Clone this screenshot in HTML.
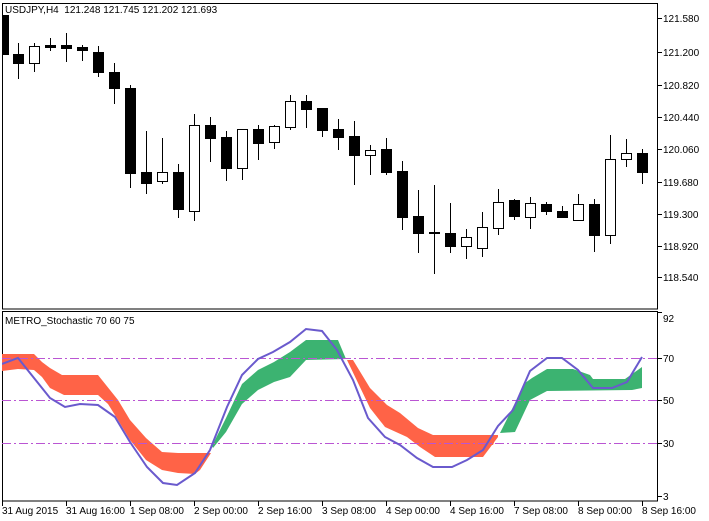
<!DOCTYPE html>
<html><head><meta charset="utf-8"><style>
html,body{margin:0;padding:0;background:#fff;width:709px;height:521px;overflow:hidden}
svg{display:block}
text{font-family:"Liberation Sans",Arial,sans-serif;font-size:10px;fill:#000}
</style></head><body>
<svg width="709" height="521" viewBox="0 0 709 521" xmlns="http://www.w3.org/2000/svg">
<defs><clipPath id="mc"><rect x="2" y="3" width="655" height="306"/></clipPath>
<clipPath id="ic"><rect x="2" y="311" width="655" height="190"/></clipPath></defs>
<rect x="2.5" y="3.5" width="655" height="305.5" fill="#fff" stroke="#000"/>
<rect x="2.5" y="311.5" width="655" height="189.5" fill="#fff" stroke="#000"/>
<text x="5" y="13">USDJPY,H4&#160; 121.248 121.745 121.202 121.693</text>
<g clip-path="url(#mc)" stroke="#000" stroke-width="1" shape-rendering="crispEdges">
<line x1="4.5" y1="15" x2="4.5" y2="54"/><rect x="-0.5" y="15.5" width="9" height="39" fill="#000"/>
<line x1="18.5" y1="43" x2="18.5" y2="79"/><rect x="13.5" y="54.5" width="10" height="9" fill="#000"/>
<line x1="34.5" y1="43" x2="34.5" y2="72"/><rect x="29.5" y="46.5" width="10" height="17" fill="#fff"/>
<line x1="50.5" y1="38" x2="50.5" y2="51"/><rect x="45.5" y="45.5" width="10" height="2" fill="#000"/>
<line x1="66.5" y1="33" x2="66.5" y2="62"/><rect x="61.5" y="45.5" width="10" height="3" fill="#000"/>
<line x1="82.5" y1="45" x2="82.5" y2="61"/><rect x="77.5" y="47.5" width="10" height="3" fill="#000"/>
<line x1="98.5" y1="46" x2="98.5" y2="77"/><rect x="93.5" y="52.5" width="10" height="20" fill="#000"/>
<line x1="114.5" y1="63" x2="114.5" y2="104"/><rect x="109.5" y="72.5" width="10" height="16" fill="#000"/>
<line x1="130.5" y1="85" x2="130.5" y2="188"/><rect x="125.5" y="88.5" width="10" height="85" fill="#000"/>
<line x1="146.5" y1="131" x2="146.5" y2="194"/><rect x="141.5" y="172.5" width="10" height="11" fill="#000"/>
<line x1="162.5" y1="138" x2="162.5" y2="184"/><rect x="157.5" y="172.5" width="10" height="9" fill="#fff"/>
<line x1="178.5" y1="164" x2="178.5" y2="218"/><rect x="173.5" y="172.5" width="10" height="37" fill="#000"/>
<line x1="194.5" y1="114" x2="194.5" y2="221"/><rect x="189.5" y="125.5" width="10" height="86" fill="#fff"/>
<line x1="210.5" y1="117" x2="210.5" y2="162"/><rect x="205.5" y="125.5" width="10" height="13" fill="#000"/>
<line x1="226.5" y1="131" x2="226.5" y2="181"/><rect x="221.5" y="137.5" width="10" height="31" fill="#000"/>
<line x1="242.5" y1="129" x2="242.5" y2="180"/><rect x="237.5" y="129.5" width="10" height="39" fill="#fff"/>
<line x1="258.5" y1="125" x2="258.5" y2="160"/><rect x="253.5" y="129.5" width="10" height="14" fill="#000"/>
<line x1="274.5" y1="125" x2="274.5" y2="149"/><rect x="269.5" y="126.5" width="10" height="16" fill="#fff"/>
<line x1="290.5" y1="95" x2="290.5" y2="130"/><rect x="285.5" y="101.5" width="10" height="26" fill="#fff"/>
<line x1="306.5" y1="95" x2="306.5" y2="128"/><rect x="301.5" y="101.5" width="10" height="8" fill="#000"/>
<line x1="322.5" y1="108" x2="322.5" y2="137"/><rect x="317.5" y="108.5" width="10" height="22" fill="#000"/>
<line x1="338.5" y1="119" x2="338.5" y2="150"/><rect x="333.5" y="129.5" width="10" height="8" fill="#000"/>
<line x1="354.5" y1="121" x2="354.5" y2="185"/><rect x="349.5" y="136.5" width="10" height="19" fill="#000"/>
<line x1="370.5" y1="145" x2="370.5" y2="175"/><rect x="365.5" y="150.5" width="10" height="5" fill="#fff"/>
<line x1="386.5" y1="138" x2="386.5" y2="175"/><rect x="381.5" y="149.5" width="10" height="23" fill="#000"/>
<line x1="402.5" y1="161" x2="402.5" y2="230"/><rect x="397.5" y="171.5" width="10" height="46" fill="#000"/>
<line x1="418.5" y1="190" x2="418.5" y2="253"/><rect x="413.5" y="216.5" width="10" height="17" fill="#000"/>
<line x1="434.5" y1="185" x2="434.5" y2="274"/><rect x="429.5" y="232.5" width="10" height="1" fill="#000"/>
<line x1="450.5" y1="203" x2="450.5" y2="253"/><rect x="445.5" y="233.5" width="10" height="13" fill="#000"/>
<line x1="466.5" y1="229" x2="466.5" y2="259"/><rect x="461.5" y="237.5" width="10" height="9" fill="#fff"/>
<line x1="482.5" y1="212" x2="482.5" y2="257"/><rect x="477.5" y="227.5" width="10" height="21" fill="#fff"/>
<line x1="498.5" y1="189" x2="498.5" y2="235"/><rect x="493.5" y="202.5" width="10" height="26" fill="#fff"/>
<line x1="514.5" y1="199" x2="514.5" y2="220"/><rect x="509.5" y="200.5" width="10" height="16" fill="#000"/>
<line x1="530.5" y1="197" x2="530.5" y2="229"/><rect x="525.5" y="203.5" width="10" height="14" fill="#fff"/>
<line x1="546.5" y1="202" x2="546.5" y2="215"/><rect x="541.5" y="204.5" width="10" height="7" fill="#000"/>
<line x1="562.5" y1="206" x2="562.5" y2="217"/><rect x="557.5" y="211.5" width="10" height="6" fill="#000"/>
<line x1="578.5" y1="194" x2="578.5" y2="221"/><rect x="573.5" y="204.5" width="10" height="16" fill="#fff"/>
<line x1="594.5" y1="199" x2="594.5" y2="252"/><rect x="589.5" y="204.5" width="10" height="31" fill="#000"/>
<line x1="610.5" y1="135" x2="610.5" y2="244"/><rect x="605.5" y="159.5" width="10" height="76" fill="#fff"/>
<line x1="626.5" y1="139" x2="626.5" y2="167"/><rect x="621.5" y="153.5" width="10" height="6" fill="#fff"/>
<line x1="642.5" y1="149" x2="642.5" y2="184"/><rect x="637.5" y="153.5" width="10" height="19" fill="#000"/>
</g>
<g stroke="#000" shape-rendering="crispEdges">
<line x1="657" y1="18.5" x2="662" y2="18.5"/><line x1="657" y1="52.5" x2="662" y2="52.5"/>
<line x1="657" y1="85.5" x2="662" y2="85.5"/><line x1="657" y1="117.5" x2="662" y2="117.5"/>
<line x1="657" y1="149.5" x2="662" y2="149.5"/><line x1="657" y1="182.5" x2="662" y2="182.5"/>
<line x1="657" y1="214.5" x2="662" y2="214.5"/><line x1="657" y1="246.5" x2="662" y2="246.5"/>
<line x1="657" y1="277.5" x2="662" y2="277.5"/>
<line x1="657" y1="312.5" x2="662" y2="312.5"/><line x1="657" y1="358.5" x2="662" y2="358.5"/>
<line x1="657" y1="400.5" x2="662" y2="400.5"/><line x1="657" y1="443.5" x2="662" y2="443.5"/>
<line x1="657" y1="496.5" x2="662" y2="496.5"/>
<line x1="2.5" y1="501" x2="2.5" y2="506"/><line x1="66.5" y1="501" x2="66.5" y2="506"/>
<line x1="130.5" y1="501" x2="130.5" y2="506"/><line x1="194.5" y1="501" x2="194.5" y2="506"/>
<line x1="258.5" y1="501" x2="258.5" y2="506"/><line x1="322.5" y1="501" x2="322.5" y2="506"/>
<line x1="386.5" y1="501" x2="386.5" y2="506"/><line x1="450.5" y1="501" x2="450.5" y2="506"/>
<line x1="514.5" y1="501" x2="514.5" y2="506"/><line x1="578.5" y1="501" x2="578.5" y2="506"/>
<line x1="642.5" y1="501" x2="642.5" y2="506"/>
</g>
<g>
<text x="663" y="22">121.580</text><text x="663" y="56">121.200</text><text x="663" y="89">120.820</text>
<text x="663" y="121">120.440</text><text x="663" y="153">120.060</text><text x="663" y="186">119.680</text>
<text x="663" y="218">119.300</text><text x="663" y="250">118.920</text><text x="663" y="281">118.540</text>
<text x="663" y="322">92</text><text x="663" y="362">70</text><text x="663" y="404">50</text>
<text x="663" y="447">30</text><text x="663" y="500">3</text>
<text x="2" y="514">31 Aug 2015</text><text x="66" y="514">31 Aug 16:00</text><text x="130" y="514">1 Sep 08:00</text>
<text x="194" y="514">2 Sep 00:00</text><text x="258" y="514">2 Sep 16:00</text><text x="322" y="514">3 Sep 08:00</text>
<text x="386" y="514">4 Sep 00:00</text><text x="450" y="514">4 Sep 16:00</text><text x="514" y="514">7 Sep 08:00</text>
<text x="578" y="514">8 Sep 00:00</text><text x="642" y="514">8 Sep 16:00</text>
</g>
<text x="5" y="324">METRO_Stochastic 70 60 75</text>
<g clip-path="url(#ic)">
<polygon fill="#ff6347" points="2,354 34,354 42,362 50,368 62,375 98,375 110,390 118,400 130,420 146,438 162,452 178,453 194,453 211,453 200,470 195,474 178,473 162,470 146,460 130,440 118,420 108,404 98,395 64,395 50,388 42,377 34,370 18,369 2,371"/>
<polygon fill="#3cb371" points="212,446 226,418 242,384 258,370 274,362 290,352 306,340 338,340 346,359 306,360 290,377 274,382 258,390 242,404 226,432 213,448"/>
<polygon fill="#ff6347" points="347,360 353,360 370,388 387,405 400,413 418,428 433,435 498,435 498,437 483,457 435,457 420,447 407,437 385,427 370,408"/>
<polygon fill="#ff6347" points="490,436 497,435 493,445 490,445"/>
<polygon fill="#3cb371" points="500,433 525,383 532,378 547,369 573,369 590,375 593,379 625,379 642,367 642,388 632,390 547,391 530,400 515,432"/>
<g stroke="#ba55d3" stroke-width="1" stroke-dasharray="9,3,2,3" shape-rendering="crispEdges">
<line x1="2" y1="358.5" x2="657" y2="358.5"/><line x1="2" y1="400.5" x2="657" y2="400.5"/><line x1="2" y1="443.5" x2="657" y2="443.5"/>
</g>
<polyline fill="none" stroke="#6a5acd" stroke-width="2" points="2,364 18,358 34,378 50,398 65,407 80,404 98,405 115,417 130,442 147,467 163,483 177,485 195,473 210,450 227,407 242,375 258,359 273,352 290,342 306,329 322,331 337,350 353,380 368,418 385,437 400,445 417,458 433,467 452,467 467,460 483,450 498,426 513,410 530,371 547,358 562,358 578,370 593,388 612,388 627,382 642,357"/>
</g>
</svg>
</body></html>
